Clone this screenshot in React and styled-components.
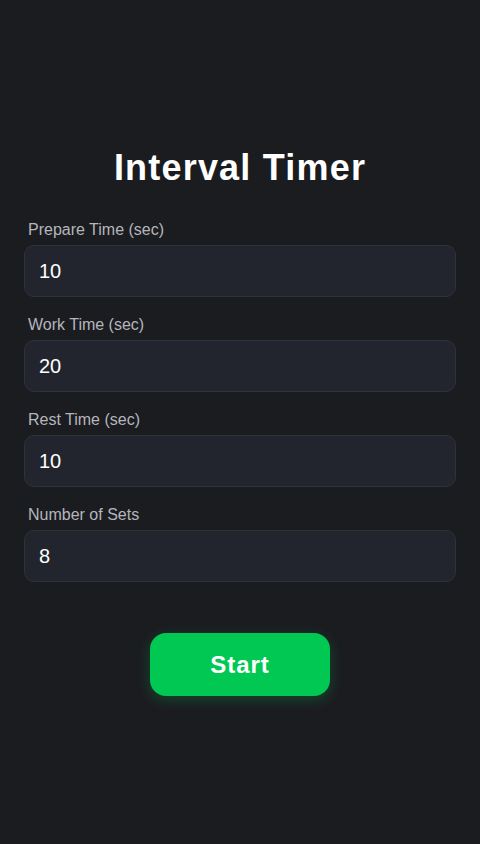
import React, { useState } from "react";
import styled, { createGlobalStyle } from "styled-components";

const Global = createGlobalStyle`
  * { box-sizing: border-box; }
  body {
    margin: 0;
    background: #1b1c20;
    font-family: "Liberation Sans", Arial, sans-serif;
  }
`

const Page = styled.div`
  min-height: 100vh;
  display: flex;
  flex-direction: column;
  justify-content: center;
  padding: 0 24px;
`
const Title = styled.h1`
  margin: 0 0 32px 0;
  text-align: center;
  color: #ffffff;
  font-size: 36px;
  font-weight: 700;
  line-height: 40px;
  letter-spacing: 1.2px;
`
const Form = styled.div`
  display: flex;
  flex-direction: column;
  gap: 18px;
`
const Field = styled.label`
  display: flex;
  flex-direction: column;
  gap: 6px;
`
const Label = styled.span`
  padding-left: 4px;
  color: #b4b6bc;
  font-size: 16px;
  line-height: 19px;
`
const Input = styled.input`
  width: 100%;
  height: 52px;
  padding: 0 14px;
  background: #23252e;
  border: 1px solid #30323a;
  border-radius: 10px;
  color: #ffffff;
  font-family: inherit;
  font-size: 20px;
  outline: none;
`
const StartButton = styled.button`
  align-self: center;
  margin-top: 51px;
  width: 180px;
  height: 63px;
  border: none;
  border-radius: 16px;
  background: #00c853;
  color: #ffffff;
  font-family: inherit;
  font-size: 24px;
  font-weight: 700;
  letter-spacing: 1px;
  box-shadow: 0 4px 14px rgba(0, 200, 83, 0.25);
  cursor: pointer;
`

const fields = [
  { key: "prepare", label: "Prepare Time (sec)", value: "10" },
  { key: "work", label: "Work Time (sec)", value: "20" },
  { key: "rest", label: "Rest Time (sec)", value: "10" },
  { key: "sets", label: "Number of Sets", value: "8" },
]

const App = () => {
  const [values, setValues] = useState(
    Object.fromEntries(fields.map(f => [f.key, f.value]))
  )
  return (
    <>
      <Global />
      <Page>
        <Title>Interval Timer</Title>
        <Form>
          {fields.map(f => (
            <Field key={f.key}>
              <Label>{f.label}</Label>
              <Input
                type="number"
                value={values[f.key]}
                onChange={e => setValues({ ...values, [f.key]: e.target.value })}
              />
            </Field>
          ))}
        </Form>
        <StartButton>Start</StartButton>
      </Page>
    </>
  )
}
export default App;
